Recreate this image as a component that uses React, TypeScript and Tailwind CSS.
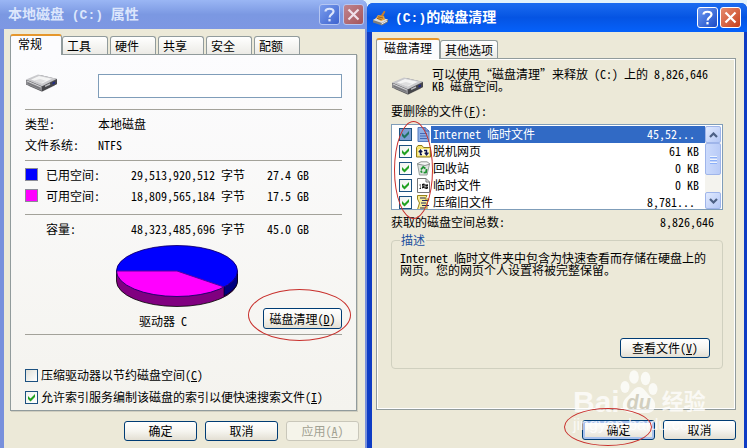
import type { ReactNode } from 'react';

const sans = 'font-["Noto_Sans_Mono_CJK_SC","Noto_Sans_CJK_SC",monospace]';
const latin = 'font-["Liberation_Mono","Noto_Sans_CJK_SC",monospace]';

/* ---------- small building blocks ---------- */

function DriveIcon() {
  return (
    <svg viewBox="0 0 33 18" className="h-[18px] w-[33px] shrink-0" aria-hidden="true">
      <path d="M1 6 L15 1 L32 5 L32 10 L17 17.5 L1 10.5Z" fill="#5b5b5f" />
      <path d="M1 6 L17 12.5 L17 17 L1 10.2Z" fill="#8b8b8f" />
      <path d="M17 12.5 L32 5.5 L32 10 L17 17Z" fill="#46464a" />
      <path d="M1 5.6 L13 0.6 L32 4.8 L17 12.2Z" fill="#c9c9cc" />
      <path d="M6 5.4 L14 2 L27 4.8 L17 9.5Z" fill="#f4f4f4" />
      <path d="M9 6.4 L16 9.3 L21 6.8 L15 5Z" fill="#dededf" />
      <path d="M2 7 L16 13" stroke="#e6e6e8" strokeWidth="0.8" />
      <path d="M3 9.2 L15 14.4" stroke="#6c6c70" strokeWidth="0.8" />
      <path d="M20 12.4 L25 10" stroke="#b9b9bd" strokeWidth="1.4" />
      <path d="M27.5 8.6 L30 7.4 L30 9.6 L27.5 10.8Z" fill="#202a86" />
      <path d="M4 11.8 L17 17.4 L30 11.2" stroke="#00000030" fill="none" />
    </svg>
  );
}

function CleanupIcon() {
  return (
    <svg viewBox="0 0 17 16" className="h-4 w-[17px] shrink-0" aria-hidden="true">
      <path d="M1 10 L6 7 L16 9.5 L16 12 L10 15.5 L1 12.5Z" fill="#7d7d7d" />
      <path d="M1 10 L6 7 L16 9.5 L10 13Z" fill="#dedede" />
      <path d="M9.5 14 L15 11" stroke="#f4f4f4" />
      <path d="M4 8 L6 5 L12 6 L13 9.5 L9 11Z" fill="#e4a23c" />
      <path d="M5 8.4 L9.6 9.6 M6 6.8 L11 8" stroke="#8a5312" strokeWidth="0.8" />
      <path d="M8.5 6 L12 0.8 L13.4 1.6 L11 6.4Z" fill="#c87f2a" />
    </svg>
  );
}

function HelpButton({ dim }: { dim?: boolean }) {
  return (
    <button
      type="button"
      aria-label="帮助"
      className={`grid size-[21px] place-items-center rounded-[3px] border ${
        dim
          ? 'border-[#b5c6f2] bg-linear-to-br from-[#7b9cec] to-[#3d62cf]'
          : 'border-white bg-linear-to-br from-[#6e99f2] to-[#1c49c6]'
      }`}
    >
      <svg viewBox="0 0 13 15" className="h-[15px] w-[13px]" fill="none" stroke={dim ? '#dde6fc' : '#fff'} strokeWidth="2.2">
        <path d="M2.5 4.6 C2.5 0.8 10.5 0.8 10.5 4.6 C10.5 7.2 6.5 7 6.5 10.6" />
        <path d="M6.5 12 V14.4" />
      </svg>
    </button>
  );
}

function CloseButton({ dim }: { dim?: boolean }) {
  return (
    <button
      type="button"
      aria-label="关闭"
      className={`grid size-[21px] place-items-center rounded-[3px] border ${
        dim
          ? 'border-[#b5c6f2] bg-linear-to-br from-[#c0848f] to-[#a4555c]'
          : 'border-white bg-linear-to-br from-[#e58b6c] to-[#c63d17]'
      }`}
    >
      <svg viewBox="0 0 13 13" className="size-[13px]" stroke={dim ? '#efe0ea' : '#fff'} strokeWidth="2.2">
        <path d="M1.5 1.5 L11.5 11.5 M11.5 1.5 L1.5 11.5" />
      </svg>
    </button>
  );
}

function PushButton({
  children,
  className = '',
  disabled,
  focused,
}: {
  children: ReactNode;
  className?: string;
  disabled?: boolean;
  focused?: boolean;
}) {
  const tone = disabled
    ? 'border-[#c9c7ba] bg-[#f5f4ea] text-[#a1a192]'
    : 'border-[#003c74] bg-linear-to-b from-white via-[#f6f5f0] to-[#e3dfd3]';
  const ring = focused ? 'shadow-[inset_0_0_0_2px_#a9c2ee]' : '';
  return (
    <button
      type="button"
      disabled={disabled}
      className={`h-5 whitespace-nowrap rounded-[3px] border text-center leading-4 ${tone} ${ring} ${className}`}
    >
      {children}
    </button>
  );
}

function Tick({ id, checked, selected }: { id: string; checked?: boolean; selected?: boolean }) {
  return (
    <span className="grid size-[13px] shrink-0">
      <input
        id={id}
        type="checkbox"
        defaultChecked={checked}
        className={`peer col-start-1 row-start-1 size-[13px] appearance-none border border-[#1c5180] ${
          selected ? 'bg-[#7b9ed3]' : 'bg-linear-to-br from-[#dfdfd8] to-white checked:from-[#f0f2ee]'
        }`}
      />
      <svg
        viewBox="0 0 13 13"
        className="pointer-events-none invisible col-start-1 row-start-1 size-[13px] peer-checked:visible"
        fill={selected ? '#1f7160' : '#21a121'}
      >
        <path d="M3 5 L5.5 7.4 L10 3 V6 L5.5 10.4 L3 8Z" />
      </svg>
    </span>
  );
}

function RedCircle({ className }: { className: string }) {
  return (
    <span className={`pointer-events-none absolute z-20 rounded-[50%] border border-[#c8302c] ${className}`} />
  );
}

function Key({ children }: { children: string }) {
  return (
    <>
      (<u className="underline underline-offset-1">{children}</u>)
    </>
  );
}

function Tabs({ names, roomy }: { names: string[]; roomy?: boolean }) {
  return (
    <div role="tablist" className="flex items-end">
      {names.map((name, i) => (
        <button
          key={name}
          type="button"
          role="tab"
          aria-selected={i === 0}
          className={
            i === 0
              ? `relative z-10 -mb-px h-[21px] rounded-t-[3px] border border-t-2 border-b-0 border-[#919b9c] border-t-[#e5972d] bg-[#fcfcfe] pb-1 text-left leading-4 ${
                  roomy ? 'px-[7px]' : 'w-[52px] px-[7px]'
                }`
              : `h-[18px] rounded-t-[3px] border border-b-0 border-[#919b9c] bg-linear-to-b from-white to-[#ecebe6] text-left leading-4 ${
                  roomy ? 'px-1' : 'mr-[2px] w-[46px] px-1'
                }`
          }
        >
          {name}
        </button>
      ))}
    </div>
  );
}

function Rule({ className = '' }: { className?: string }) {
  return <hr className={`border-t border-[#a3a29a] ${className}`} />;
}

/* ---------- disk properties ---------- */

function Pie() {
  return (
    <svg viewBox="0 0 122 62" className="h-[62px] w-[122px]" role="img" aria-label="驱动器 C">
      <path d="M0.5 26 V36 A60.5 25.5 0 0 0 121.5 36 V26Z" fill="#800080" stroke="#000" strokeWidth="0.8" />
      <path d="M108 40 V51 C117 46 121.5 41 121.5 36 V26Z" fill="#000080" stroke="#000" strokeWidth="0.6" />
      <ellipse cx="61" cy="26" rx="60.5" ry="25.5" fill="#ff00ff" />
      <path d="M61 26 H0.5 A60.5 25.5 0 0 1 121.5 26 C121.5 32 117 37 108 42Z" fill="#0000ff" />
      <path d="M0.5 26 H61 L108 42" fill="none" stroke="#5a00a0" />
      <ellipse cx="61" cy="26" rx="60.5" ry="25.5" fill="none" stroke="#000060" strokeWidth="0.8" />
    </svg>
  );
}

function SpaceRow({ swatch, label, bytes, size }: { swatch?: string; label: string; bytes: string; size: string }) {
  return (
    <div className="flex h-[21px] items-center whitespace-nowrap">
      <span className={`size-[13px] shrink-0 ${swatch ? `border border-[#8b8b96] ${swatch}` : ''}`} />
      <span className="ml-2 w-[85px]">{label}</span>
      <span className="w-[136px]">{bytes} 字节</span>
      <span>{size}</span>
    </div>
  );
}

function PropertiesWindow() {
  return (
    <section className="flex flex-col rounded-tr-[6px] bg-[#7890dc] pb-[2px]">
      <header className="flex h-[29px] items-center gap-[3px] rounded-tr-[6px] bg-linear-to-b from-[#9ab6f4] via-[#7b98e2] to-[#7d97e3] pr-[3px] pl-2 text-[#dce6fc]">
        <h1 className="flex-1 whitespace-pre text-[14px] font-bold leading-5">
          本地磁盘<span className={`text-[13px] ${latin}`}> (C:) </span>属性
        </h1>
        <HelpButton dim />
        <CloseButton dim />
      </header>
      <div className="mr-[2px] ml-1 flex-1 bg-[#ece9d8] px-[6px] pt-[5px] pb-[6px]">
        <Tabs names={['常规', '工具', '硬件', '共享', '安全', '配额']} />
        <div className="mr-[2px] border border-[#919b9c] bg-linear-to-b from-[#fcfcfe] to-[#f4f3ee] px-[14px] pt-[19px] pb-[2px] shadow-[1px_1px_0_#d0cec0]">
          <div className="flex h-6">
            <DriveIcon />
            <input
              aria-label="卷标"
              type="text"
              className="ml-10 h-6 min-w-0 flex-1 border border-[#7f9db9] bg-white px-1 outline-none"
            />
          </div>
          <Rule className="mt-[11px] mb-[3px]" />
          <dl className="grid grid-cols-[73px_1fr] leading-[21px]">
            <dt>类型:</dt>
            <dd>本地磁盘</dd>
            <dt>文件系统:</dt>
            <dd>NTFS</dd>
          </dl>
          <Rule className="mt-[5px] mb-[3px]" />
          <SpaceRow swatch="bg-[#0000ff]" label="已用空间:" bytes="29,513,920,512" size="27.4 GB" />
          <SpaceRow swatch="bg-[#ff00ff]" label="可用空间:" bytes="18,809,565,184" size="17.5 GB" />
          <Rule className="mt-2 mb-[3px]" />
          <SpaceRow label="容量:" bytes="48,323,485,696" size="45.0 GB" />
          <div className="mt-[6px] flex items-end justify-between">
            <figure className="ml-[91px]">
              <Pie />
              <figcaption className="mt-[7px] mb-px pl-[23px] leading-[14px]">驱动器 C</figcaption>
            </figure>
            <div className="relative">
              <PushButton className="h-[21px] w-[79px]">
                磁盘清理<Key>D</Key>
              </PushButton>
              <RedCircle className="-top-[19px] -left-[15px] h-[52px] w-[103px]" />
            </div>
          </div>
          <Rule className="mt-[5px] mb-[29px]" />
          <div className="flex h-[22px] items-center gap-[3px] whitespace-nowrap">
            <Tick id="compress" />
            <label htmlFor="compress">
              压缩驱动器以节约磁盘空间<Key>C</Key>
            </label>
          </div>
          <div className="flex h-[22px] items-center gap-[3px] whitespace-nowrap">
            <Tick id="index" checked />
            <label htmlFor="index">
              允许索引服务编制该磁盘的索引以便快速搜索文件<Key>I</Key>
            </label>
          </div>
        </div>
        <footer className="mt-[10px] flex justify-end gap-2">
          <PushButton className="w-[73px]">确定</PushButton>
          <PushButton className="w-[73px]">取消</PushButton>
          <PushButton className="w-[73px]" disabled>
            应用<Key>A</Key>
          </PushButton>
        </footer>
      </div>
    </section>
  );
}

/* ---------- disk cleanup ---------- */

function PageIcon() {
  return (
    <svg viewBox="0 0 15 15" className="size-[15px] shrink-0">
      <path d="M2 0.5 H9 L13 4 V14.5 H2Z" fill="#8fb1e6" stroke="#5279bd" />
      <path d="M9 0.5 V4 H13M4 6.5 H11M4 9 H11M4 11.5 H11" stroke="#4468b4" fill="none" />
    </svg>
  );
}

function OfflineIcon() {
  return (
    <svg viewBox="0 0 15 15" className="size-[15px] shrink-0">
      <path d="M0.5 3.5 L2 1.5 H6 L7.5 3.5 H14.5 V13 H0.5Z" fill="#f5e36c" stroke="#8f7a1a" />
      <rect x="2.5" y="5" width="10.5" height="6.5" fill="#fffbe0" />
      <path d="M6 10.5 H4.5 V7M2.8 8.3 L4.5 6.2 L6.2 8.3M8 6.5 H10.5 V10M8.8 8.6 L10.5 10.8 L12.4 8.6" fill="none" stroke="#111a50" strokeWidth="1.4" />
    </svg>
  );
}

function RecycleIcon() {
  return (
    <svg viewBox="0 0 15 15" className="size-[15px] shrink-0">
      <path d="M1.5 3 L3.5 14 H11 L13.5 3Z" fill="#dfe3e0" stroke="#9aa39d" />
      <path d="M1 3 L5 0.8 H11 L14 3 L9 4.5Z" fill="#f5f5f5" stroke="#8f9692" />
      <path d="M5 8.5 L7.2 6 L9.4 7.4M10.6 8 L10 11.4 L7.6 11.6M5 9.6 L5.8 11.8" fill="none" stroke="#1e9130" strokeWidth="1.8" />
    </svg>
  );
}

function TempIcon() {
  return (
    <svg viewBox="0 0 15 15" className="size-[15px] shrink-0">
      <path d="M1.5 0.5 H10 L13.5 4 V14.5 H1.5Z" fill="#fff" stroke="#777" />
      <path d="M10 0.5 V4 H13.5" fill="none" stroke="#777" />
      <path d="M6 6 Q8 4.8 9 6 Q10.5 7 12 6 V10.5 Q10.5 11.5 9 10.4 Q7.5 9.4 6 10.5Z" fill="#111" />
      <path d="M3.500 7 H5M4 9 H5M3.500 10.500 H5" stroke="#222" strokeWidth="1.2" />
      <path d="M9 6 V10.4M6 8.3 Q8 7 9 8.3 Q10.5 9.3 12 8.3" stroke="#fff" strokeWidth="0.5" fill="none" />
    </svg>
  );
}

function ZipIcon() {
  return (
    <svg viewBox="0 0 15 15" className="size-[15px] shrink-0">
      <path d="M1.5 0.5 H11 L9 4 H13 L11 8 V14.5 H1.5 L3.5 8 L1.5 4Z" fill="#f6ec9a" stroke="#9a8518" />
      <path d="M4 3 H9M6 5.5 H12M5 8 H10M6 10.5 H13M4 13 H9" stroke="#27285e" strokeWidth="1.2" />
    </svg>
  );
}

const files = [
  { id: 'f1', name: 'Internet 临时文件', size: '45,52...', icon: <PageIcon />, cut: true },
  { id: 'f2', name: '脱机网页', size: '61 KB', icon: <OfflineIcon />, cut: false },
  { id: 'f3', name: '回收站', size: '0 KB', icon: <RecycleIcon />, cut: false },
  { id: 'f4', name: '临时文件', size: '0 KB', icon: <TempIcon />, cut: false },
  { id: 'f5', name: '压缩旧文件', size: '8,781...', icon: <ZipIcon />, cut: true },
];

function ScrollArrow({ up }: { up?: boolean }) {
  return (
    <button
      type="button"
      aria-label={up ? '向上' : '向下'}
      className="grid h-[17px] w-4 place-items-center rounded-[2px] border border-[#9fb5ea] bg-linear-to-br from-[#e1eafe] to-[#b5c8f6]"
    >
      <svg viewBox="0 0 9 6" className="h-[6px] w-[9px]" fill="none" stroke="#4d6185" strokeWidth="2.2">
        <path d={up ? 'M1 5 L4.5 1.5 L8 5' : 'M1 1 L4.5 4.5 L8 1'} />
      </svg>
    </button>
  );
}

function FileList() {
  return (
    <div className="relative">
      <div className="flex h-[86px] overflow-hidden border border-[#7f9db9] bg-white pt-px">
        <ul className="flex-1">
          {files.map((f, i) => (
            <li key={f.id} className="flex h-[17px] items-center pl-[7px]">
              <Tick id={f.id} checked selected={i === 0} />
              <span className="ml-1 flex">{f.icon}</span>
              <label
                htmlFor={f.id}
                className={`flex h-[17px] flex-1 justify-between pl-[2px] leading-4 ${
                  i === 0 ? 'bg-[#316ac5] text-white' : ''
                } ${f.cut ? 'pr-[10px]' : 'pr-[6px]'}`}
              >
                <span>{f.name}</span>
                <span>{f.size}</span>
              </label>
            </li>
          ))}
        </ul>
        <div className="mr-px flex w-4 flex-col bg-[#f4f3ee]">
          <ScrollArrow up />
          <div className="grid h-8 place-items-center rounded-[2px] border border-[#9fb5ea] bg-linear-to-r from-[#cbdafc] to-[#b9cbf7]">
            <span className="grid gap-px">
              <i className="h-px w-[7px] bg-[#eef4fe] shadow-[0_1px_0_#8cb0f8]" />
              <i className="mt-px h-px w-[7px] bg-[#eef4fe] shadow-[0_1px_0_#8cb0f8]" />
              <i className="mt-px h-px w-[7px] bg-[#eef4fe] shadow-[0_1px_0_#8cb0f8]" />
            </span>
          </div>
          <div className="flex-1" />
          <ScrollArrow />
        </div>
      </div>
      <RedCircle className="-top-[3px] left-[3px] h-[98px] w-[39px]" />
    </div>
  );
}

function Watermark() {
  return (
    <div className='pointer-events-none absolute right-[40px] bottom-[15px] z-10 w-[134px] font-["Liberation_Sans","Noto_Sans_CJK_SC",sans-serif] text-white/75'>
      <div className="flex h-[44px] items-end whitespace-nowrap">
        <span className="text-[30px] font-bold leading-6">Bai</span>
        <span className="relative grid h-[44px] w-[38px] shrink-0 place-items-end justify-center">
          <svg viewBox="0 0 38 44" className="absolute inset-0 h-[44px] w-[38px]" fill="currentColor">
            <ellipse cx="5" cy="17" rx="4.5" ry="6" />
            <ellipse cx="14" cy="7" rx="4.8" ry="6.8" />
            <ellipse cx="25.5" cy="8.5" rx="4.8" ry="6.8" />
            <ellipse cx="33" cy="19" rx="4.5" ry="6" />
            <path d="M19 17 C24 17 26 23 31 27 C38 33 36 43 27 43 C22 43 16 43 11 43 C2 43 0 33 7 27 C12 23 14 17 19 17Z" />
          </svg>
          <span className="relative text-[20px] font-bold italic leading-6 text-[#d2cfbf]">du</span>
        </span>
        <span className="ml-1 text-[22px] font-bold leading-6">经验</span>
      </div>
      <p className="mt-px whitespace-nowrap text-[16px] leading-5">jingyan.baidu.com</p>
    </div>
  );
}

function CleanupWindow() {
  return (
    <section className="relative mt-[3px] flex flex-col rounded-t-[6px] bg-[#0f3cc4] pb-[2px]">
      <header className="flex h-[29px] items-center gap-[2px] rounded-t-[6px] bg-linear-to-b from-[#1b6cf0] via-[#0554e3] to-[#0561fa] pr-[6px] pl-[5px] text-white">
        <CleanupIcon />
        <h1 className="ml-1 flex-1 whitespace-pre text-[14px] font-bold leading-5">
          <span className={`text-[13px] ${latin}`}>(C:)</span>的磁盘清理
        </h1>
        <HelpButton />
        <CloseButton />
      </header>
      <div className="mr-[3px] ml-[5px] flex-1 bg-[#ece9d8] px-1 pt-[6px] pb-2">
        <Tabs names={['磁盘清理', '其他选项']} roomy />
        <div className="mr-1 border border-[#919b9c] p-px shadow-[inset_0_0_0_1px_#fff]">
          <div className="pt-2 pr-[11px] pb-[39px] pl-[13px]">
            <div className="flex leading-3">
              <span className="pt-[9px]">
                <DriveIcon />
              </span>
              <p className="ml-2 w-[280px]">可以使用“磁盘清理”来释放 (C:) 上的 8,826,646 KB 磁盘空间。</p>
            </div>
            <h2 className="mt-[6px] mb-[3px] leading-5">
              要删除的文件<Key>F</Key>:
            </h2>
            <FileList />
            <div className="flex justify-between pr-[9px] leading-6">
              <span>获取的磁盘空间总数:</span>
              <span>8,826,646</span>
            </div>
            <fieldset className="rounded-[4px] border border-[#d0d0bf] px-2 pb-[10px]">
              <legend className="px-px leading-3 text-[#1b4f9e]">描述</legend>
              <p className="mt-[6px] min-h-[86px] leading-3">
                Internet 临时文件夹中包含为快速查看而存储在硬盘上的网页。您的网页个人设置将被完整保留。
              </p>
              <div className="mr-1 flex justify-end">
                <PushButton className="w-[90px]">
                  查看文件<Key>V</Key>
                </PushButton>
              </div>
            </fieldset>
          </div>
        </div>
        <footer className="mt-[10px] mr-1 flex justify-end gap-2">
          <div className="relative">
            <PushButton className="w-[73px]" focused>
              确定
            </PushButton>
            <RedCircle className="-top-[12px] -left-[18px] h-[38px] w-[88px]" />
          </div>
          <PushButton className="w-[73px]">取消</PushButton>
        </footer>
      </div>
      <Watermark />
    </section>
  );
}

export default function App() {
  return (
    <main
      className={`grid min-h-screen grid-cols-[367fr_380fr] bg-[#e3f3fb] text-[12px] leading-4 text-black ${sans}`}
    >
      <PropertiesWindow />
      <CleanupWindow />
    </main>
  );
}
